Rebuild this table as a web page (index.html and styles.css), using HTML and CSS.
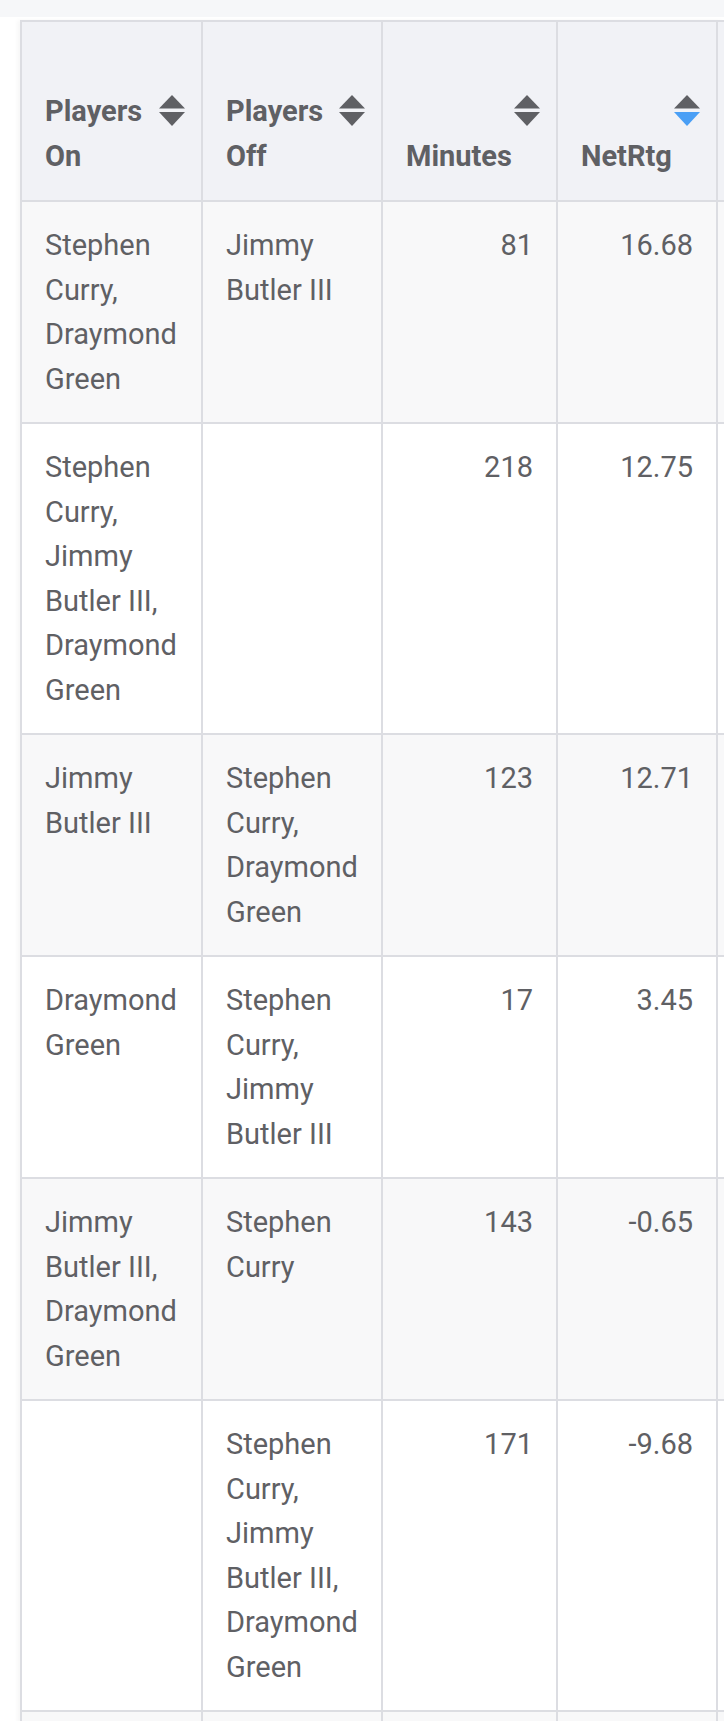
FILE: index.html
```html
<!DOCTYPE html>
<html lang="en">
<head>
<meta charset="utf-8">
<title>Lineup stats</title>
<link rel="stylesheet" href="styles.css">
</head>
<body>
<div class="topband"></div>
<div class="wrap">
  <table class="stats">
    <colgroup>
      <col class="c-on"><col class="c-off"><col class="c-min"><col class="c-net"><col class="c-extra">
    </colgroup>
    <thead>
      <tr>
        <th class="txt"><span class="sort"><svg viewBox="0 0 26 31" width="26" height="31"><path class="up" d="M0 13.5 L13 0 L26 13.5 Z"/><path class="down" d="M0 17 L26 17 L13 31 Z"/></svg></span>Players On</th>
        <th class="txt"><span class="sort"><svg viewBox="0 0 26 31" width="26" height="31"><path class="up" d="M0 13.5 L13 0 L26 13.5 Z"/><path class="down" d="M0 17 L26 17 L13 31 Z"/></svg></span>Players Off</th>
        <th class="num"><span class="sort"><svg viewBox="0 0 26 31" width="26" height="31"><path class="up" d="M0 13.5 L13 0 L26 13.5 Z"/><path class="down" d="M0 17 L26 17 L13 31 Z"/></svg></span>Minutes</th>
        <th class="num"><span class="sort"><svg viewBox="0 0 26 31" width="26" height="31"><path class="up" d="M0 13.5 L13 0 L26 13.5 Z"/><path class="down active" d="M0 17 L26 17 L13 31 Z"/></svg></span>NetRtg</th>
        <th class="txt"></th>
      </tr>
    </thead>
    <tbody>
      <tr>
        <td>Stephen Curry, Draymond Green</td>
        <td>Jimmy Butler III</td>
        <td class="num">81</td>
        <td class="num">16.68</td>
        <td></td>
      </tr>
      <tr>
        <td>Stephen Curry, Jimmy Butler III, Draymond Green</td>
        <td></td>
        <td class="num">218</td>
        <td class="num">12.75</td>
        <td></td>
      </tr>
      <tr>
        <td>Jimmy Butler III</td>
        <td>Stephen Curry, Draymond Green</td>
        <td class="num">123</td>
        <td class="num">12.71</td>
        <td></td>
      </tr>
      <tr>
        <td>Draymond Green</td>
        <td>Stephen Curry, Jimmy Butler III</td>
        <td class="num">17</td>
        <td class="num">3.45</td>
        <td></td>
      </tr>
      <tr>
        <td>Jimmy Butler III, Draymond Green</td>
        <td>Stephen Curry</td>
        <td class="num">143</td>
        <td class="num">-0.65</td>
        <td></td>
      </tr>
      <tr>
        <td></td>
        <td>Stephen Curry, Jimmy Butler III, Draymond Green</td>
        <td class="num">171</td>
        <td class="num">-9.68</td>
        <td></td>
      </tr>
      <tr>
        <td>&nbsp;</td>
        <td></td>
        <td class="num"></td>
        <td class="num"></td>
        <td></td>
      </tr>
    </tbody>
  </table>
</div>
</body>
</html>
```
FILE: styles.css
```css
html, body {
  margin: 0;
  padding: 0;
  background: #ffffff;
}

body {
  font-family: Roboto, "Liberation Sans", Arial, sans-serif;
  color: #5f6064;
  overflow: hidden;
}

.topband {
  height: 17px;
  background: #f6f7f9;
}

.wrap {
  margin: 3px 0 0 20px;
  overflow: hidden;
  box-shadow: -3px 0 4px rgba(0, 0, 0, 0.03);
}

.stats {
  border-collapse: collapse;
  table-layout: fixed;
  width: 900px;
  font-size: 29px;
  line-height: 44.5px;
}

.c-on { width: 181px; }
.c-off { width: 180px; }
.c-min { width: 175px; }
.c-net { width: 160px; }
.c-extra { width: 204px; }

.stats th,
.stats td {
  border: 2px solid #dcdde2;
  padding: 21px 23px;
  vertical-align: top;
  text-align: left;
}

.stats th {
  background: #f1f2f6;
  font-weight: 700;
  vertical-align: bottom;
  padding-top: 67px;
  padding-bottom: 22px;
  padding-right: 16px;
}

.stats td.num {
  text-align: right;
}

.stats tbody tr:nth-child(odd) td {
  background: #f8f8f9;
}

.stats tbody tr:nth-child(even) td {
  background: #ffffff;
}

.sort {
  float: right;
  display: block;
  width: 26px;
  height: 31px;
  margin: 6px 0 7.5px 6px;
}

.sort svg {
  display: block;
}

.sort .up,
.sort .down {
  fill: #5f6064;
}

.sort .down.active {
  fill: #4a9ff5;
}
```
